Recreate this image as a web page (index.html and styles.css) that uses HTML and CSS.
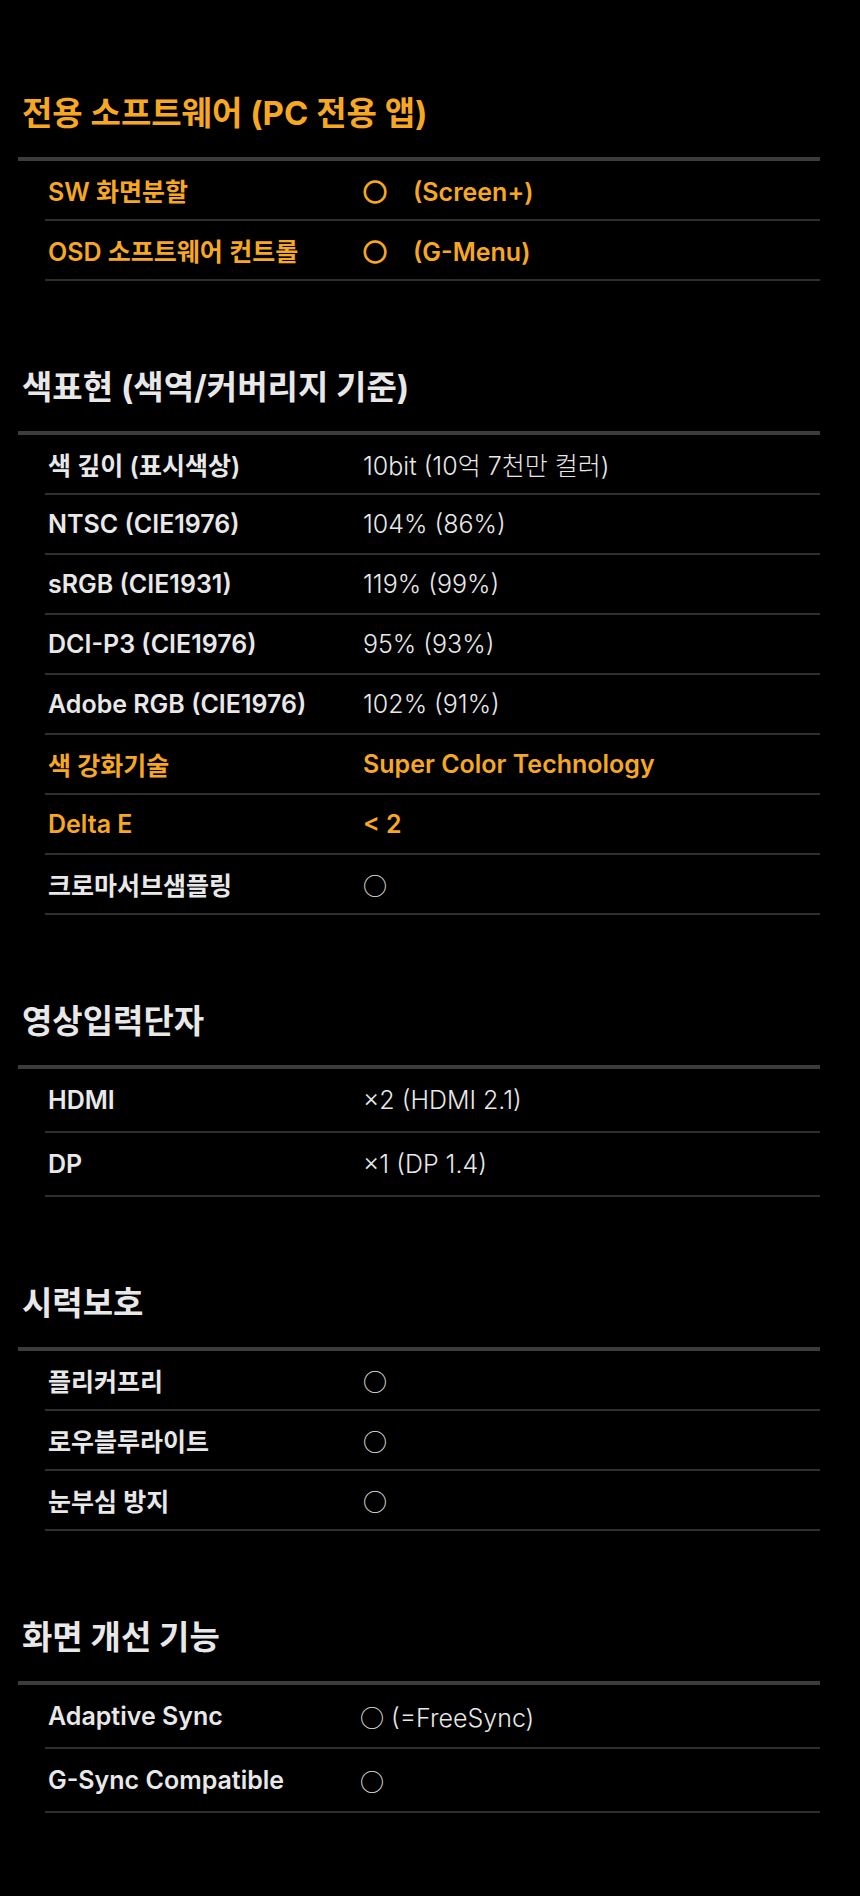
FILE: index.html
```html
<!DOCTYPE html>
<html lang="ko">
<head>
    <meta charset="UTF-8">
    <meta name="viewport" content="width=device-width, initial-scale=1.0">
    <title>제품 사양</title>
    <link rel="stylesheet" href="styles.css">
</head>
<body>
    <div class="spec-page">

        <section class="spec-section">
            <h2 class="spec-title highlight">전용 소프트웨어 (PC 전용 앱)</h2>
            <div class="spec-list">
                <div class="spec-row highlight">
                    <div class="spec-label">SW 화면분할</div>
                    <div class="spec-value"><span class="mark">○</span><span class="gap"></span>(Screen+)</div>
                </div>
                <div class="spec-row highlight">
                    <div class="spec-label">OSD 소프트웨어 컨트롤</div>
                    <div class="spec-value"><span class="mark">○</span><span class="gap"></span>(G-Menu)</div>
                </div>
            </div>
        </section>

        <section class="spec-section">
            <h2 class="spec-title">색표현 (색역/커버리지 기준)</h2>
            <div class="spec-list">
                <div class="spec-row">
                    <div class="spec-label">색 깊이 (표시색상)</div>
                    <div class="spec-value">10bit (10억 7천만 컬러)</div>
                </div>
                <div class="spec-row">
                    <div class="spec-label">NTSC (CIE1976)</div>
                    <div class="spec-value">104% (86%)</div>
                </div>
                <div class="spec-row">
                    <div class="spec-label">sRGB (CIE1931)</div>
                    <div class="spec-value">119% (99%)</div>
                </div>
                <div class="spec-row">
                    <div class="spec-label">DCI-P3 (CIE1976)</div>
                    <div class="spec-value">95% (93%)</div>
                </div>
                <div class="spec-row">
                    <div class="spec-label">Adobe RGB (CIE1976)</div>
                    <div class="spec-value">102% (91%)</div>
                </div>
                <div class="spec-row highlight">
                    <div class="spec-label">색 강화기술</div>
                    <div class="spec-value">Super Color Technology</div>
                </div>
                <div class="spec-row highlight">
                    <div class="spec-label">Delta E</div>
                    <div class="spec-value">&lt; 2</div>
                </div>
                <div class="spec-row">
                    <div class="spec-label">크로마서브샘플링</div>
                    <div class="spec-value"><span class="mark">○</span></div>
                </div>
            </div>
        </section>

        <section class="spec-section">
            <h2 class="spec-title">영상입력단자</h2>
            <div class="spec-list">
                <div class="spec-row tall">
                    <div class="spec-label">HDMI</div>
                    <div class="spec-value">×2 (HDMI 2.1)</div>
                </div>
                <div class="spec-row tall">
                    <div class="spec-label">DP</div>
                    <div class="spec-value">×1 (DP 1.4)</div>
                </div>
            </div>
        </section>

        <section class="spec-section">
            <h2 class="spec-title">시력보호</h2>
            <div class="spec-list">
                <div class="spec-row">
                    <div class="spec-label">플리커프리</div>
                    <div class="spec-value"><span class="mark">○</span></div>
                </div>
                <div class="spec-row">
                    <div class="spec-label">로우블루라이트</div>
                    <div class="spec-value"><span class="mark">○</span></div>
                </div>
                <div class="spec-row">
                    <div class="spec-label">눈부심 방지</div>
                    <div class="spec-value"><span class="mark">○</span></div>
                </div>
            </div>
        </section>

        <section class="spec-section">
            <h2 class="spec-title">화면 개선 기능</h2>
            <div class="spec-list">
                <div class="spec-row tall">
                    <div class="spec-label">Adaptive Sync</div>
                    <div class="spec-value shift"><span class="mark">○</span> (=FreeSync)</div>
                </div>
                <div class="spec-row tall">
                    <div class="spec-label">G-Sync Compatible</div>
                    <div class="spec-value shift"><span class="mark">○</span></div>
                </div>
            </div>
        </section>

    </div>
</body>
</html>
```

FILE: styles.css
```css
body {
    margin: 0;
    background-color: #000;
    color: #e8e8e8;
    font-family: Inter, "Noto Sans CJK KR", sans-serif;
}

.spec-page {
    padding: 93px 40px 86px 18px;
}

.spec-section + .spec-section {
    margin-top: 86px;
}

.spec-title {
    margin: 0;
    padding: 0 0 24px 4px;
    font-size: 33px;
    line-height: 40px;
    font-weight: 700;
    border-bottom: 4px solid #3c3c3c;
}

.spec-title.highlight {
    color: #f7a823;
}

.spec-list {
    margin-left: 27px;
}

.spec-row {
    display: grid;
    grid-template-columns: 318px 1fr;
    align-items: center;
    height: 58px;
    border-bottom: 2px solid #2f2f2f;
}

.spec-row.tall {
    height: 62px;
}

.spec-row.highlight {
    color: #f7a823;
}

.spec-label {
    padding-left: 3px;
    font-size: 25px;
    font-weight: 600;
}

.spec-value {
    font-size: 25px;
    font-weight: 300;
}

.spec-row.highlight .spec-value {
    font-weight: 600;
}

.spec-value.shift {
    margin-left: -3px;
}

.mark {
    font-family: "Noto Sans CJK KR", sans-serif;
    font-size: 24px;
}

.spec-row.highlight .mark {
    -webkit-text-stroke: 1.4px currentColor;
}

.gap {
    display: inline-block;
    width: 26px;
}
```
